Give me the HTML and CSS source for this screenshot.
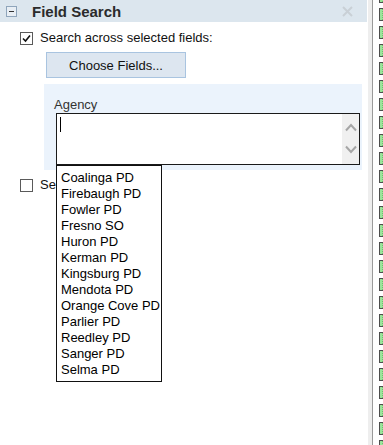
FILE: index.html
```html
<html>
<head>
    <title>Field Search</title>
    <meta name="viewport" content="width=device-width, initial-scale=1" />
    <link rel="stylesheet" href="styles.css">
</head>
<body>
<div class="layout">
    <div class="panel">
        <div class="panel-header">
            <span class="collapse-box"><span class="minus"></span></span>
            <span class="panel-title">Field Search</span>
            <svg class="close-x" width="11" height="11" viewBox="0 0 11 11">
                <path d="M1 1 L10 10 M10 1 L1 10" stroke="#c9d0d6" stroke-width="2" fill="none"/>
            </svg>
        </div>

        <div class="check-row">
            <span class="checkbox">
                <svg width="11" height="11" viewBox="0 0 11 11">
                    <path d="M2 5.5 L4.5 8 L9 2.5" stroke="#111" stroke-width="1.6" fill="none"/>
                </svg>
            </span>
            <span class="check-label">Search across selected fields:</span>
        </div>

        <button class="choose-btn">Choose Fields...</button>

        <div class="field-box">
            <div class="field-label">Agency</div>
            <div class="input-wrap">
                <div class="fake-textarea">
                    <span class="caret"></span>
                    <div class="ta-scroll">
                        <svg width="12" height="9" viewBox="0 0 12 9"><path d="M1 7.5 L6 2 L11 7.5" stroke="#a6a6a6" stroke-width="2" fill="none"/></svg>
                        <svg width="12" height="9" viewBox="0 0 12 9"><path d="M1 1.5 L6 7 L11 1.5" stroke="#a6a6a6" stroke-width="2" fill="none"/></svg>
                    </div>
                </div>
                <!-- open suggestion list, drawn over the row below -->
                <ul class="suggest-list">
                    <li>Coalinga PD</li>
                    <li>Firebaugh PD</li>
                    <li>Fowler PD</li>
                    <li>Fresno SO</li>
                    <li>Huron PD</li>
                    <li>Kerman PD</li>
                    <li>Kingsburg PD</li>
                    <li>Mendota PD</li>
                    <li>Orange Cove PD</li>
                    <li>Parlier PD</li>
                    <li>Reedley PD</li>
                    <li>Sanger PD</li>
                    <li>Selma PD</li>
                </ul>
            </div>
        </div>

        <div class="check-row second">
            <span class="checkbox"></span>
            <span class="check-label">Search all fields</span>
        </div>
    </div>

    <div class="splitter"></div>

    <div class="green-strip">
        <div class="gblock"></div><div class="gblock"></div><div class="gblock"></div>
        <div class="gblock"></div><div class="gblock"></div><div class="gblock"></div>
        <div class="gblock"></div><div class="gblock"></div><div class="gblock"></div>
        <div class="gblock"></div><div class="gblock"></div><div class="gblock"></div>
        <div class="gblock"></div><div class="gblock"></div><div class="gblock"></div>
        <div class="gblock"></div><div class="gblock"></div><div class="gblock"></div>
        <div class="gblock"></div><div class="gblock"></div><div class="gblock"></div>
        <div class="gblock"></div><div class="gblock"></div><div class="gblock"></div>
        <div class="gblock"></div><div class="gblock"></div>
    </div>
</div>
</body>
</html>
```

FILE: styles.css
```css
body {
    margin: 0;
    background: #fff;
    font-family: "Liberation Sans", Arial, sans-serif;
    font-size: 13px;
    color: #111;
    overflow: hidden;
}

.layout {
    display: flex;
    height: 445px;
}

.panel {
    width: 367px;
    flex: none;
}

/* header bar */
.panel-header {
    height: 22px;
    background: #dce6ee;
    display: flex;
    align-items: center;
}

.collapse-box {
    width: 9px;
    height: 9px;
    border: 1px solid #8fa5bb;
    margin-left: 6px;
    display: flex;
    align-items: center;
    justify-content: center;
    background: #e8eef4;
}

.collapse-box .minus {
    width: 5px;
    height: 1px;
    background: #333;
}

.panel-title {
    margin-left: 15px;
    font-size: 15px;
    font-weight: bold;
    color: #2b2b2b;
}

.close-x {
    margin-left: auto;
    margin-right: 14px;
}

/* checkbox rows */
.check-row {
    display: flex;
    align-items: center;
    margin: 10px 0 0 20px;
    height: 13px;
}

.check-row.second {
    margin-top: 9px;
}

.checkbox {
    width: 11px;
    height: 11px;
    border: 1px solid #5a5a5a;
    background: #fff;
    display: flex;
    align-items: center;
    justify-content: center;
}

.check-label {
    margin-left: 7px;
    line-height: 15px;
    position: relative;
    top: -1px;
    white-space: nowrap;
}

.choose-btn {
    display: block;
    margin: 7px 0 0 46px;
    width: 140px;
    height: 26px;
    background: #dde6f0;
    border: 1px solid #a9c4e0;
    font-family: "Liberation Sans", Arial, sans-serif;
    font-size: 13px;
    color: #111;
    padding: 0;
}

/* agency field */
.field-box {
    margin: 6px 0 0 44px;
    width: 318px;
    height: 86px;
    box-sizing: border-box;
    background: #ebf3fc;
    padding: 13px 0 0 10px;
}

.field-label {
    line-height: 15px;
    color: #333;
}

.input-wrap {
    position: relative;
    margin: 1px 0 0 2px;
    width: 304px;
}

.fake-textarea {
    height: 52px;
    box-sizing: border-box;
    border: 1px solid #1a1a1a;
    background: #fff;
    display: flex;
}

.caret {
    width: 1px;
    height: 15px;
    background: #000;
    margin: 3px 0 0 3px;
}

.ta-scroll {
    margin-left: auto;
    width: 17px;
    background: #f0f0f0;
    display: flex;
    flex-direction: column;
    align-items: center;
    justify-content: space-between;
    padding: 9px 0 10px;
}

.ta-scroll svg {
    display: block;
}

.suggest-list {
    position: absolute;
    top: 52px;
    left: 0;
    width: 106px;
    box-sizing: border-box;
    margin: 0;
    padding: 4px 0 3px 4px;
    list-style: none;
    background: #fff;
    border: 1px solid #111;
    z-index: 5;
}

.suggest-list li {
    line-height: 16px;
    color: #000;
    white-space: nowrap;
}

/* right edge of the screen */
.splitter {
    width: 4px;
    flex: none;
    background: #eeeeee;
    border-right: 1px solid #9a9a9a;
    margin-left: 1px;
}

.green-strip {
    margin-left: 6px;
    width: 4px;
    overflow: hidden;
    display: flex;
    flex-direction: column;
    gap: 5px;
    padding-top: 8px;
}

.green-strip .gblock:first-child {
    margin-top: -18px;
}

.gblock {
    flex: none;
    width: 14px;
    height: 11px;
    border: 1px solid #4d4d4d;
    background: #9be49b;
    background-image: linear-gradient(#6fbf6f 1px, transparent 1px);
    background-size: 2px 2px;
    background-position: 2px 0;
    background-repeat: repeat-y;
}
```
